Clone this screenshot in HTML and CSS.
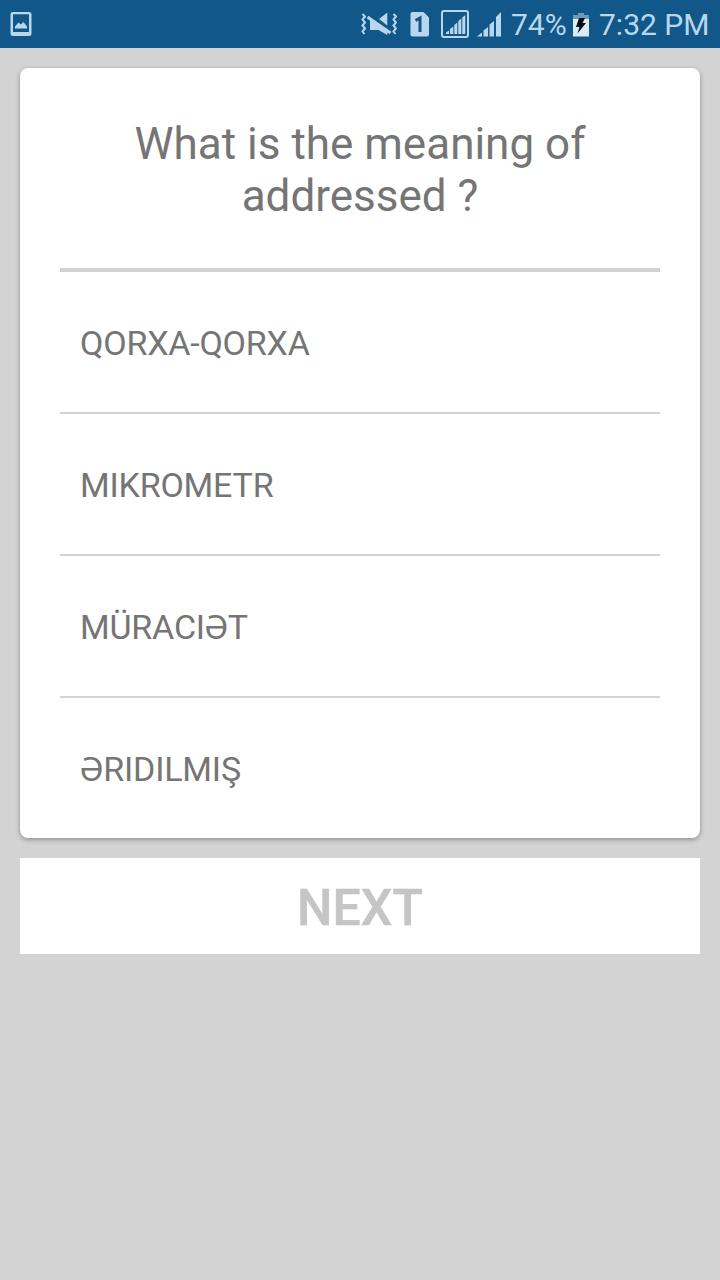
FILE: index.html
```html
<!DOCTYPE html>
<html lang="en">
<head>
<meta charset="utf-8">
<title>Vocabulary Quiz</title>
<link rel="stylesheet" href="styles.css">
</head>
<body>
<header class="status-bar">
  <svg class="icon-picture" width="22" height="26" viewBox="0 0 22 26">
    <path class="ink" fill-rule="evenodd" d="M3 1H19Q21.500 1 21.500 3.500V22.500Q21.500 25 19 25H3Q.5 25 .5 22.500V3.500Q.5 1 3 1ZM3 3.300V21H19V3.300Z"/>
    <path class="ink" d="M5 17.500V15.500L8.500 11.500L11 13.500L13.500 11L17 15.500V17.500Z"/>
  </svg>
  <div class="status-right">
    <svg class="icon-mute" width="36" height="26" viewBox="0 0 36 26">
      <path class="wave" d="M1.500 3L4 5.500L1.500 8.500L4 11.500L1.500 14.500L4 17.500L1.500 20.500L3.500 23M32.500 3L35 5.500L32.500 8.500L35 11.500L32.500 14.500L35 17.500L32.500 20.500L34.500 23"/>
      <path class="ink" d="M9 7.500L26.300 19.500V24L17.500 19H9ZM18 8L26.300 1.500V14.500Z"/>
      <path class="slash" d="M6.500 6L29.500 22"/>
    </svg>
    <svg class="icon-sim" width="19" height="25" viewBox="0 0 19 25">
      <path class="ink" d="M2.500 0H13.500L19 5.500V22.500Q19 24.500 17 24.500H2.500Q.5 24.500 .5 22.500V2Q.5 0 2.500 0Z"/>
      <path class="digit" d="M5.500 8.500L10 6V20"/>
    </svg>
    <svg class="icon-signal-box" width="28" height="28" viewBox="0 0 28 28">
      <rect class="frame" x="1" y="1" width="26" height="26" rx="2"/>
      <path class="ink" d="M5 24V22.500L8 20.500V24ZM9 24V19L12.300 16.500V24ZM13.300 24V15L16.300 12.500V24ZM17.300 24V11L20.300 8.500V24ZM21.300 24V7.500L24.300 5V24Z"/>
    </svg>
    <svg class="icon-signal" width="25" height="25" viewBox="0 0 25 25">
      <path class="ink" d="M0 24.500L5 20.500V24.500ZM6.500 24.500V18.500L11 15V24.500ZM12.500 24.500V12.500L17 9V24.500ZM19 24.500V5L24 0V24.500Z"/>
    </svg>
    <span class="percent">74%</span>
    <svg class="icon-battery" width="16" height="25" viewBox="0 0 16 25">
      <path class="battery-top" d="M5 1H11V3H16V7H0V3H5Z"/>
      <path class="battery-fill" d="M0 7H16V24.500H0Z"/>
      <path class="bolt" d="M6 6H12L9.500 11H13L4.500 21.500L6.500 15H3Z"/>
    </svg>
    <span class="clock">7:32 PM</span>
  </div>
</header>
<main class="quiz">
  <section class="card">
    <h1 class="question">What is the meaning of addressed ?</h1>
    <ul class="answers">
      <li class="answer">QORXA-QORXA</li>
      <li class="answer">MIKROMETR</li>
      <li class="answer">MÜRACIƏT</li>
      <li class="answer">ƏRIDILMIŞ</li>
    </ul>
  </section>
  <button class="next" type="button">NEXT</button>
</main>
</body>
</html>
```
FILE: styles.css
```css
* {
  box-sizing: border-box;
}

body {
  margin: 0;
  min-height: 1280px;
  background: #d3d3d3;
  color: #757575;
  font-family: Roboto, "Noto Sans", sans-serif;
}

.status-bar {
  display: flex;
  align-items: center;
  justify-content: space-between;
  height: 48px;
  padding: 0 12px 0 10px;
  background: #115789;
  color: #b9d7ec;
}

.status-right {
  display: flex;
  align-items: center;
  font-size: 30px;
  line-height: 48px;
  white-space: nowrap;
}

svg {
  display: block;
  flex: none;
}

.ink {
  fill: #b9d7ec;
}

.wave {
  fill: none;
  stroke: #b9d7ec;
  stroke-width: 2;
}

.slash {
  fill: none;
  stroke: #b9d7ec;
  stroke-width: 3;
}

.digit {
  fill: none;
  stroke: #115789;
  stroke-width: 3;
}

.frame {
  fill: none;
  stroke: #b9d7ec;
  stroke-width: 2;
}

.battery-top {
  fill: #7099b8;
}

.battery-fill {
  fill: #d9edf8;
}

.bolt {
  fill: #080c10;
}

.icon-sim {
  margin-left: 13px;
}

.icon-signal-box {
  margin-left: 12px;
}

.icon-signal {
  margin-left: 8px;
}

.percent {
  width: 56px;
  margin-left: 9px;
  padding-top: 2px;
}

.icon-battery {
  margin-left: 6px;
}

.clock {
  width: 109px;
  margin-left: 10px;
  padding-top: 2px;
}

.quiz {
  display: flex;
  flex-direction: column;
  gap: 20px;
  padding: 20px;
}

.card {
  padding: 0 40px;
  border-radius: 8px;
  background: #fff;
  box-shadow: 0 2px 5px rgba(0, 0, 0, 0.28), 0 0 3px rgba(0, 0, 0, 0.1);
}

.question {
  height: 204px;
  margin: 0;
  padding: 50px 40px 0;
  border-bottom: 4px solid #d3d3d3;
  font-size: 44px;
  font-weight: 400;
  line-height: 52px;
  text-align: center;
}

.answers {
  margin: 0;
  padding: 0;
  list-style: none;
}

.answer {
  display: flex;
  align-items: center;
  height: 142px;
  padding: 2px 20px 0;
  border-bottom: 2px solid #d3d3d3;
  font-size: 34px;
  letter-spacing: -0.2px;
}

.answer:last-child {
  height: 140px;
  border-bottom: 0;
}

.next {
  height: 96px;
  padding: 4px 0 0;
  border: 0;
  background: #fff;
  color: #c5c5c5;
  font-family: inherit;
  font-size: 50px;
  font-weight: 500;
  -webkit-text-stroke: 0.5px #c5c5c5;
}
```
